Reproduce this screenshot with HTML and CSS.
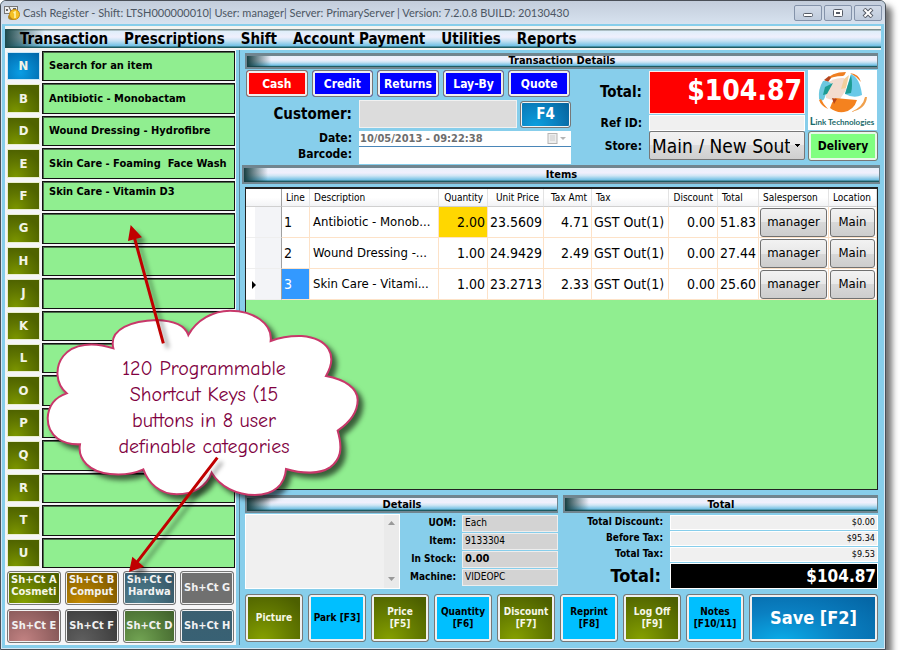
FILE: index.html
```html
<!DOCTYPE html>
<html lang="en">
<head>
<meta charset="utf-8">
<title>Cash Register</title>
<link rel="stylesheet" href="styles.css">
</head>
<body>
<main class="window">
  <header class="titlebar">
    <svg class="app-icon" width="16" height="16" viewBox="0 0 16 16" aria-hidden="true">
      <rect x="0.5" y="1.5" width="13" height="7" fill="#eee" stroke="#777"/>
      <path d="M2 4h2v2H2zM9 3h3v3H9z" fill="#666"/>
      <path d="M5 2l3 6" stroke="#555"/>
      <ellipse cx="8" cy="12" rx="4" ry="3" fill="#a9842a"/>
      <circle cx="10.500" cy="9.500" r="5" fill="#f4c025" stroke="#c58a10"/>
      <path d="M9.500 8l1.500-1v6" fill="none" stroke="#fff3b0" stroke-width="1.500"/>
    </svg>
    <h1>Cash Register - Shift: LTSH000000010| User: manager| Server: PrimaryServer | Version: 7.2.0.8 BUILD: 20130430</h1>
    <div class="caption-buttons">
      <button aria-label="Minimize"><svg width="12" height="10" viewBox="0 0 12 10"><rect x="1.500" y="5.500" width="9" height="3" rx="1" fill="#fff" stroke="#555b66"/></svg></button>
      <button aria-label="Maximize"><svg width="12" height="10" viewBox="0 0 12 10"><rect x="1.500" y="1.500" width="9" height="7" rx="1" fill="#fff" stroke="#555b66"/><rect x="4.500" y="4.500" width="3" height="1" fill="#fff" stroke="#555b66"/></svg></button>
      <button aria-label="Close"><svg width="12" height="10" viewBox="0 0 12 10"><path d="M2 1l8 8M10 1L2 9" stroke="#555b66" stroke-width="4"/><path d="M2.500 1.500l7 7M9.500 1.500l-7 7" stroke="#fff" stroke-width="2"/></svg></button>
    </div>
  </header>

  <nav class="menu">
    <a href="#transaction">Transaction</a>
    <a href="#prescriptions">Prescriptions</a>
    <a href="#shift">Shift</a>
    <a href="#account">Account Payment</a>
    <a href="#utilities">Utilities</a>
    <a href="#reports">Reports</a>
  </nav>

  <div class="workspace">
    <aside class="shortcuts">
      <ul class="keys">
        <li><button class="key blue">N</button><span class="slot">Search for an item</span></li>
        <li><button class="key">B</button><span class="slot">Antibiotic - Monobactam</span></li>
        <li><button class="key">D</button><span class="slot">Wound Dressing - Hydrofibre</span></li>
        <li><button class="key">E</button><span class="slot">Skin Care - Foaming&nbsp; Face Wash</span></li>
        <li><button class="key">F</button><span class="slot raised">Skin Care - Vitamin D3</span></li>
        <li><button class="key">G</button><span class="slot"></span></li>
        <li><button class="key">H</button><span class="slot"></span></li>
        <li><button class="key">J</button><span class="slot"></span></li>
        <li><button class="key">K</button><span class="slot"></span></li>
        <li><button class="key">L</button><span class="slot"></span></li>
        <li><button class="key">O</button><span class="slot"></span></li>
        <li><button class="key">P</button><span class="slot"></span></li>
        <li><button class="key">Q</button><span class="slot"></span></li>
        <li><button class="key">R</button><span class="slot"></span></li>
        <li><button class="key">T</button><span class="slot"></span></li>
        <li><button class="key">U</button><span class="slot"></span></li>
      </ul>
      <div class="categories">
        <button class="cat olive top">Sh+Ct A<br>Cosmeti</button>
        <button class="cat amber top">Sh+Ct B<br>Comput</button>
        <button class="cat steel top">Sh+Ct C<br>Hardwa</button>
        <button class="cat gray">Sh+Ct G</button>
        <button class="cat rose">Sh+Ct E</button>
        <button class="cat dark">Sh+Ct F</button>
        <button class="cat green">Sh+Ct D</button>
        <button class="cat teal">Sh+Ct H</button>
      </div>
    </aside>

    <div class="content">
      <h2 class="bar slim">Transaction Details</h2>
      <section class="transaction">
        <div class="entry">
          <div class="modes">
            <button class="mode active">Cash</button>
            <button class="mode">Credit</button>
            <button class="mode">Returns</button>
            <button class="mode">Lay-By</button>
            <button class="mode">Quote</button>
          </div>
          <div class="customer">
            <label for="customer" class="big">Customer:</label>
            <input id="customer" class="customer-box">
            <button class="f4">F4</button>
          </div>
          <div class="dates">
            <label for="date">Date:</label>
            <div class="date-box">
              <input id="date" value="10/05/2013 - 09:22:38" readonly>
              <svg width="20" height="12" viewBox="0 0 20 12" aria-hidden="true"><rect x="1" y="0.500" width="9" height="10" fill="#eee" stroke="#b5b5b5"/><path d="M3 3h5M3 5h5M3 7h5" stroke="#ccc"/><path d="M13 4h6l-3 3z" fill="#b5b5b5"/></svg>
            </div>
            <label for="barcode">Barcode:</label>
            <input id="barcode" class="barcode-box">
          </div>
        </div>
        <div class="summary">
          <label for="total" class="big">Total:</label>
          <input id="total" class="total-box" value="$104.87" readonly>
          <label for="ref">Ref ID:</label>
          <input id="ref" class="ref-box">
          <label for="store">Store:</label>
          <select id="store" class="store-box"><option>Main / New South Wales</option></select>
        </div>
        <div class="brand">
          <svg class="logo" viewBox="0 0 69 60" role="img" aria-label="Link Technologies">
            <rect width="69" height="60" fill="#fff"/>
            <path d="M18 14Q26 7 36 8l2 12-8 12-12-4z" fill="#f3dccf"/>
            <path d="M17 11Q23 2 38 2q-1 3-3 4Q24 6 17 11z" fill="#ef7f22"/>
            <path d="M16 10l4 2 3-4-2-2z" fill="#b5451d"/>
            <path d="M15 11Q10 19 11 29q4 4 6-2 2-9 7-13-6-4-9-3z" fill="#6cc8df"/>
            <path d="M17 17l8-4-6 11-4 1z" fill="#1d9c93"/>
            <path d="M43 4Q52 8 54 25q-8 4-17-1z" fill="#69c9e8"/>
            <path d="M43 5q2 10 0 18l-6 1z" fill="#1d9c93"/>
            <path d="M36 9l5-4-3 13-5 1z" fill="#f2cf9c"/>
            <path d="M42 3q9 1 11 9-5-6-11-9z" fill="#ef7f22"/>
            <path d="M27 28q10 1 22 2-3 10-13 12-8 1-14-4 2-6 5-10z" fill="#f4821f"/>
            <path d="M24 28l5 1-3 5z" fill="#b5451d"/>
            <path d="M57 27q-2 10-14 15 15-3 16-15z" fill="#f0a04d"/>
            <path d="M11 30q2 6 9 9-5-5-7-10z" fill="#f4821f"/>
            <text x="34" y="55" class="logo-text" text-anchor="middle"><tspan class="logo-cap">L</tspan>ink Technologies</text>
          </svg>
          <button class="delivery">Delivery</button>
        </div>
      </section>

      <h2 class="bar wide">Items</h2>
      <div class="items">
        <table>
          <colgroup><col class="c-head"><col class="c-line"><col><col class="c-qty"><col class="c-price"><col class="c-amt"><col class="c-tax"><col class="c-disc"><col class="c-total"><col class="c-sales"><col class="c-loc"></colgroup>
          <thead>
            <tr><th></th><th>Line</th><th>Description</th><th class="num">Quantity</th><th class="num">Unit Price</th><th class="num">Tax Amt</th><th>Tax</th><th class="num">Discount</th><th>Total</th><th>Salesperson</th><th>Location</th></tr>
          </thead>
          <tbody>
            <tr><td class="rowhead"></td><td>1</td><td class="name">Antibiotic - Monob...</td><td class="num gold">2.00</td><td class="num">23.5609</td><td class="num">4.71</td><td>GST Out(1)</td><td class="num">0.00</td><td class="num">51.83</td><td class="act"><button>manager</button></td><td class="act"><button>Main</button></td></tr>
            <tr><td class="rowhead"></td><td>2</td><td class="name">Wound Dressing -...</td><td class="num">1.00</td><td class="num">24.9429</td><td class="num">2.49</td><td>GST Out(1)</td><td class="num">0.00</td><td class="num">27.44</td><td class="act"><button>manager</button></td><td class="act"><button>Main</button></td></tr>
            <tr><td class="rowhead"><svg width="6" height="8" viewBox="0 0 6 8" aria-hidden="true"><path d="M1 0l4 4-4 4z"/></svg></td><td class="selected">3</td><td class="name">Skin Care - Vitami...</td><td class="num">1.00</td><td class="num">23.2713</td><td class="num">2.33</td><td>GST Out(1)</td><td class="num">0.00</td><td class="num">25.60</td><td class="act"><button>manager</button></td><td class="act"><button>Main</button></td></tr>
          </tbody>
        </table>
      </div>

      <div class="lower">
        <section class="details">
          <h2 class="bar">Details</h2>
          <div class="details-body">
            <div class="notes">
              <textarea aria-label="Item notes"></textarea>
              <div class="scroll">
                <svg width="8" height="5" viewBox="0 0 8 5"><path d="M0 4h7L3.500 0z" fill="#999"/></svg>
                <svg width="8" height="5" viewBox="0 0 8 5"><path d="M0 0h7L3.500 4z" fill="#999"/></svg>
              </div>
            </div>
            <div class="facts">
              <label for="uom">UOM:</label><input id="uom" value="Each" readonly>
              <label for="item">Item:</label><input id="item" value="9133304" readonly>
              <label for="stock">In Stock:</label><input id="stock" class="strong" value="0.00" readonly>
              <label for="machine">Machine:</label><input id="machine" value="VIDEOPC" readonly>
            </div>
          </div>
        </section>
        <section class="totals">
          <h2 class="bar">Total</h2>
          <div class="totals-body">
            <label for="disc">Total Discount:</label><input id="disc" value="$0.00" readonly>
            <label for="before">Before Tax:</label><input id="before" value="$95.34" readonly>
            <label for="tax">Total Tax:</label><input id="tax" value="$9.53" readonly>
            <label for="grand" class="grand-label">Total:</label><input id="grand" class="grand" value="$104.87" readonly>
          </div>
        </section>
      </div>

      <div class="actions">
        <button class="action olive">Picture</button>
        <button class="action cyan">Park [F3]</button>
        <button class="action olive">Price<br>[F5]</button>
        <button class="action cyan">Quantity<br>[F6]</button>
        <button class="action olive">Discount<br>[F7]</button>
        <button class="action cyan">Reprint<br>[F8]</button>
        <button class="action olive">Log Off<br>[F9]</button>
        <button class="action cyan">Notes<br>[F10/11]</button>
        <button class="action save">Save [F2]</button>
      </div>
    </div>
  </div>
</main>

<div class="callout">
  <svg viewBox="0 0 1140 1140" aria-hidden="true">
    <path class="cloud" d="M340 445C325 385 400 362 470 360C520 362 555 375 565 405C590 360 640 332 690 332C760 332 818 370 812 423C840 412 870 407 905 408C985 415 1015 465 978 528C1035 538 1073 565 1073 600C1073 640 1045 670 1013 692C1030 750 1020 780 990 802C960 822 910 822 858 807C855 855 820 885 765 885C710 885 660 860 635 818C620 860 580 883 530 883C480 883 445 850 430 808C400 822 360 825 330 822C270 815 232 780 240 733C190 735 143 710 143 655C145 610 170 590 200 580C165 550 165 500 190 468C220 430 280 425 340 445Z"/>
    <g class="arrow">
      <path d="M490 430L403 112M652 773L410 1088"/>
      <path class="tip" d="M392 75L384 123L426 112ZM387 1116L397 1070L432 1100Z"/>
    </g>
  </svg>
  <p>120 Programmable<br>Shortcut Keys (15<br>buttons in 8 user<br>definable categories</p>
</div>
</body>
</html>
```
FILE: styles.css
```css
* { box-sizing: border-box; }

body {
  margin: 0;
  background: #fff;
  color: #000;
  font-family: "DejaVu Sans Condensed", "DejaVu Sans", sans-serif;
  font-size: 11px;
  line-height: 14px;
}

button, input, select, textarea {
  margin: 0;
  padding: 0;
  border: 0;
  border-radius: 0;
  color: inherit;
  font: inherit;
  min-width: 0;
}

h1, h2, ul, p { margin: 0; padding: 0; }
label { font-weight: bold; text-align: right; white-space: nowrap; }

.window {
  display: flex;
  flex-direction: column;
  min-height: calc(100vh - 13px);
  margin-right: 14px;
  padding: 0 4px 4px;
  border: 1px solid #4a4f57;
  border-radius: 6px 6px 0 0;
  background: #87ceeb;
  box-shadow: inset 0 0 0 1px #d5e7f3, 6px 6px 6px rgba(0, 0, 0, .55);
}

/* Title bar */
.titlebar {
  display: flex;
  align-items: center;
  gap: 3px;
  height: 23px;
  margin: 0 -4px 2px;
  padding: 0 3px;
  border-radius: 5px 5px 0 0;
  background: linear-gradient(#c3cddb, #d7e2ef);
}
.titlebar h1 {
  flex: 1;
  color: #4c5663;
  font: 11px/16px Lato, "Noto Sans", sans-serif;
  white-space: nowrap;
}
.caption-buttons { display: flex; gap: 2px; }
.caption-buttons button {
  display: flex;
  align-items: center;
  justify-content: center;
  width: 28px;
  height: 16px;
  border: 1px solid #8493aa;
  border-radius: 2px;
  background: linear-gradient(#d2dbe8, #bfcbdc);
}

/* Menu */
.menu {
  display: flex;
  align-items: center;
  gap: 16px;
  height: 24px;
  padding: 0 15px;
  border-top: 3px solid #f4f4f0;
  border-bottom: 2px solid #f4f4f0;
  background:
    linear-gradient(90deg, #1d4a4c, rgba(29, 74, 76, 0) 40px),
    linear-gradient(#7b8f8f 0 1px, #dfeefa 2px, #efeffc 8px, #c2e0f2 12px, #6fc0e4 17px, #1d5b62 18px);
}
.menu a {
  color: #000;
  font-size: 15px;
  font-weight: bold;
  line-height: 18px;
  text-decoration: none;
  white-space: nowrap;
}

.workspace { display: flex; flex: 1; min-height: 0; }

/* Shortcut keys */
.shortcuts {
  display: flex;
  flex-direction: column;
  flex: 0 0 231px;
  padding: 1px 0 2px 2px;
  background: #f5f5f7;
}
.keys {
  display: grid;
  grid-auto-rows: 1fr;
  gap: 2px;
  flex: 1;
  list-style: none;
}
.keys li { display: grid; grid-template-columns: 33px 1fr; gap: 2px; padding-right: 1px; }
.key {
  margin: 1px 0;
  background: radial-gradient(circle at 25% 100%, #7c9600, #5f7500 45%, #4f6300 75%);
  border: 1px solid #e8edcf;
  color: #f2f4e6;
  font-size: 13px;
  font-weight: bold;
}
.key.blue { background: radial-gradient(circle at 40% 75%, #0a9de4, #0063a6); border-color: #cde7f7; }
.slot {
  display: flex;
  align-items: center;
  padding-left: 6px;
  border: 1px solid #111;
  background: #90ee90;
  font-weight: bold;
  box-shadow: inset 1px 1px 0 #4b6b4b;
  white-space: nowrap;
}
.slot.raised { align-items: flex-start; padding-top: 3px; }

.categories {
  display: grid;
  grid-template-columns: repeat(4, 1fr);
  gap: 4px;
  padding: 3px 2px 0 0;
}
.cat, .action, .f4, .mode, .delivery {
  border: 1px solid #777;
  border-radius: 3px;
  box-shadow: inset 0 0 0 1px #f3f3f3;
  font-weight: bold;
}
.cat { height: 34px; color: #f2f2f2; line-height: 12px; white-space: nowrap; }
.cat.top { padding-bottom: 4px; }
.olive { background: radial-gradient(circle at 30% 100%, #87a200, #667d00 45%, #4d6000 85%); color: #f6f8e8; }
.amber { background: radial-gradient(circle at 30% 100%, #c58a00, #9a6d00 50%, #7c5500 90%); }
.steel { background: radial-gradient(circle at 30% 100%, #508090, #426a7a 50%, #355364 90%); }
.gray { background: #707070; }
.rose { background: radial-gradient(circle at 30% 100%, #c38383, #9c6767 50%, #7c5252 90%); }
.dark { background: radial-gradient(circle at 30% 100%, #606060, #4a4a4a 50%, #383838 90%); }
.green { background: radial-gradient(circle at 30% 100%, #73a554, #56803c 50%, #43642e 90%); }
.teal { background: linear-gradient(#3b6071, #386174); }

/* Section bars */
.content {
  display: flex;
  flex-direction: column;
  flex: 1;
  min-width: 0;
  margin-left: 3px;
  padding: 3px 3px 3px 5px;
  border-left: 1px solid #5b8497;
}
.bar {
  height: 18px;
  border: 2px solid #70858f;
  border-width: 3px 1px 2px 2px;
  background:
    linear-gradient(90deg, #173f42, rgba(23, 63, 66, 0) 24px),
    linear-gradient(#e9f1fb, #f0effc 35%, #cfe6f5 55%, #72c0e4 85%, #1d5b62 95%);
  font-size: 11px;
  line-height: 13px;
  text-align: center;
}
.bar.slim { height: 16px; line-height: 9px; }
.bar.wide { height: 19px; margin: 0 -2px 3px -3px; line-height: 14px; }

/* Transaction */
.transaction { display: flex; gap: 3px; height: 96px; padding-top: 1px; }
.entry { flex: 0 0 326px; }
.modes { display: grid; grid-template-columns: repeat(5, 1fr); gap: 4px; padding: 0 1px; }
.mode { height: 27px; background: #00f; color: #fff; font-size: 12px; box-shadow: inset 0 0 0 2px #eee; }
.mode.active { background: #f00; }
.customer {
  display: grid;
  grid-template-columns: 110px 158px 51px;
  column-gap: 3px;
  align-items: center;
  margin-top: 3px;
  padding-left: 1px;
}
.customer label { padding-right: 4px; }
.big { font-size: 15px; line-height: 18px; }
.customer-box { width: 100%; height: 28px; border: 1px solid #f1f1f1; background: #dcdcdc; }
.f4 {
  height: 27px;
  background: radial-gradient(circle at 30% 100%, #0aa0e0, #0a80bf 50%, #06669f 90%);
  color: #fff;
  font-size: 15px;
}
.dates {
  display: grid;
  grid-template-columns: 107px 212px;
  grid-template-rows: 16px 17px;
  column-gap: 7px;
  align-items: center;
  margin-top: 3px;
}
.dates label { font-size: 12px; padding-bottom: 3px; }
.date-box {
  display: flex;
  align-items: center;
  height: 16px;
  padding: 0 4px 0 1px;
  background: #fff;
  border-bottom: 1px solid #4a86b8;
}
.date-box input { flex: 1; background: transparent; color: #6d6d6d; font-size: 11px; font-weight: bold; }
.barcode-box { height: 17px; background: #fff; }

.summary {
  display: grid;
  flex: 1;
  grid-template-columns: 1fr 156px;
  grid-template-rows: 44px 17px 29px;
  column-gap: 7px;
  align-items: center;
}
.summary label { font-size: 12px; }
.summary label.big { font-size: 15px; }
.total-box {
  width: 100%;
  height: 43px;
  padding: 0 2px 4px 0;
  border: 1px solid #ffe9e9;
  background: #f00;
  color: #fff;
  font-size: 28px;
  font-weight: bold;
  text-align: right;
}
.ref-box { width: 100%; height: 16px; background: #f0f0f0; border: 1px solid #fff; }
.store-box {
  appearance: none;
  width: 100%;
  height: 29px;
  padding: 0 14px 0 2px;
  border: 1px solid #777;
  border-radius: 2px;
  background:
    linear-gradient(to bottom left, #000 50%, transparent 50%) right 7px center / 3px 3px no-repeat,
    linear-gradient(to bottom right, #000 50%, transparent 50%) right 4px center / 3px 3px no-repeat,
    linear-gradient(#f2f2f2, #ebebeb 50%, #dcdcdc 50%, #cfcfcf);
  font-size: 19px;
}
.brand { flex: 0 0 70px; display: flex; flex-direction: column; gap: 1px; }
.logo { display: block; width: 69px; height: 60px; }
.logo-text { fill: #1a6b6b; font: bold 8px Lato, sans-serif; }
.logo-cap { font-size: 11px; }
.delivery { height: 30px; background: #80ff80; font-size: 12px; box-shadow: inset 0 0 0 2px #e8f8e8; }

/* Items grid */
.items {
  flex: 1;
  min-height: 180px;
  border: 1px solid #222;
  border-top-width: 2px;
  background: #90ee90;
}
table { width: 100%; table-layout: fixed; border-collapse: separate; border-spacing: 0; background: #fff; }
.c-head { width: 36px; }
.c-line { width: 28px; }
.c-qty { width: 49px; }
.c-price { width: 56px; }
.c-amt { width: 48px; }
.c-tax { width: 77px; }
.c-disc { width: 49px; }
.c-total { width: 41px; }
.c-sales { width: 70px; }
.c-loc { width: 48px; }
th {
  height: 18px;
  padding: 0 4px;
  border-right: 1px solid #e3e3e3;
  border-bottom: 1px solid #d0d0d0;
  background: linear-gradient(#fff, #fff 50%, #f2f3f5);
  font-size: 10px;
  font-weight: normal;
  text-align: left;
  white-space: nowrap;
}
td {
  height: 31px;
  padding: 0 2px;
  border-right: 1px solid #fde2c8;
  border-bottom: 1px solid #fde2c8;
  font-size: 14px;
  line-height: 18px;
  white-space: nowrap;
}
td.name { padding-left: 3px; font-size: 13px; }
tr > :nth-child(1) { border-right-color: #a0a0a0; }
.num { text-align: right; }
td.gold { background: #ffd700; }
td.selected { background: #3399ff; color: #fff; }
.rowhead { padding-left: 5px; border-bottom-color: #eee; background: linear-gradient(90deg, #fff 9px, #f3f4f7 9px); }
.act { padding: 0 1px; }
.act button {
  display: block;
  width: 100%;
  height: 29px;
  border: 1px solid #707070;
  border-radius: 3px;
  background: linear-gradient(#f2f2f2, #e8e8e8 50%, #d8d8d8 50%, #cdcdcd);
  font-size: 13px;
}

/* Details and totals */
.lower { display: grid; grid-template-columns: 313px 1fr; gap: 5px; margin-top: 5px; }
.lower label { font-size: 10px; }
.details-body { display: flex; gap: 4px; padding-top: 1px; }
.notes { display: flex; flex: 0 0 155px; height: 75px; border: 1px solid #fff; background: #f0f0f0; }
.notes textarea { flex: 1; resize: none; background: transparent; }
.scroll {
  display: flex;
  flex-direction: column;
  align-items: center;
  justify-content: space-between;
  width: 15px;
  padding: 6px 0;
  background: #eaeaea;
}
.facts {
  display: grid;
  flex: 1;
  grid-template-columns: 52px 1fr;
  grid-auto-rows: 18px;
  column-gap: 6px;
  align-items: center;
}
.facts input { width: 100%; height: 17px; padding: 0 2px 2px; border: 1px solid #eee; background: #d3d3d3; font-size: 10px; }
.facts input.strong { font-size: 11px; font-weight: bold; }
.totals-body {
  display: grid;
  grid-template-columns: 100px 1fr;
  grid-template-rows: 16px 16px 16px 27px;
  column-gap: 7px;
  align-items: center;
  padding-top: 1px;
}
.totals-body input {
  width: 100%;
  height: 15px;
  padding-right: 2px;
  border: 1px solid #fff;
  background: #f0f0f0;
  font-size: 9px;
  text-align: right;
}
.totals-body label.grand-label { padding-right: 2px; font-size: 18px; line-height: 22px; }
.totals-body input.grand { height: 26px; padding-right: 1px; background: #000; color: #fff; font-size: 17px; font-weight: bold; }

/* Action buttons */
.actions { display: grid; grid-template-columns: repeat(8, 58px) 1fr; gap: 5px; margin-top: 5px; }
.action { height: 48px; font-size: 10px; line-height: 12px; white-space: nowrap; box-shadow: inset 0 0 0 2px #f0f0f0; }
.cyan { background: #00bfff; }
.save { background: radial-gradient(ellipse at 25% 100%, #0aace8, #0a80c2 45%, #0567a6 90%); color: #fff; font-size: 18px; }

/* Callout drawn over the window */
.callout { position: absolute; top: 200px; left: 0; width: 380px; height: 380px; pointer-events: none; }
.callout svg { position: absolute; inset: 0; width: 100%; height: 100%; }
.cloud { fill: #fff; stroke: #c8386a; stroke-width: 6; filter: drop-shadow(14px 14px 8px rgba(0, 0, 0, .6)); }
.arrow { fill: none; stroke: #c00000; stroke-width: 9; filter: drop-shadow(14px 14px 6px rgba(0, 0, 0, .4)); }
.tip { fill: #c00000; stroke: none; }
.callout p {
  position: absolute;
  top: 156px;
  left: 50px;
  width: 308px;
  color: #800040;
  font: 20px/26px "Comic Sans MS", "Comic Neue", Lato, sans-serif;
  text-align: center;
}
```
